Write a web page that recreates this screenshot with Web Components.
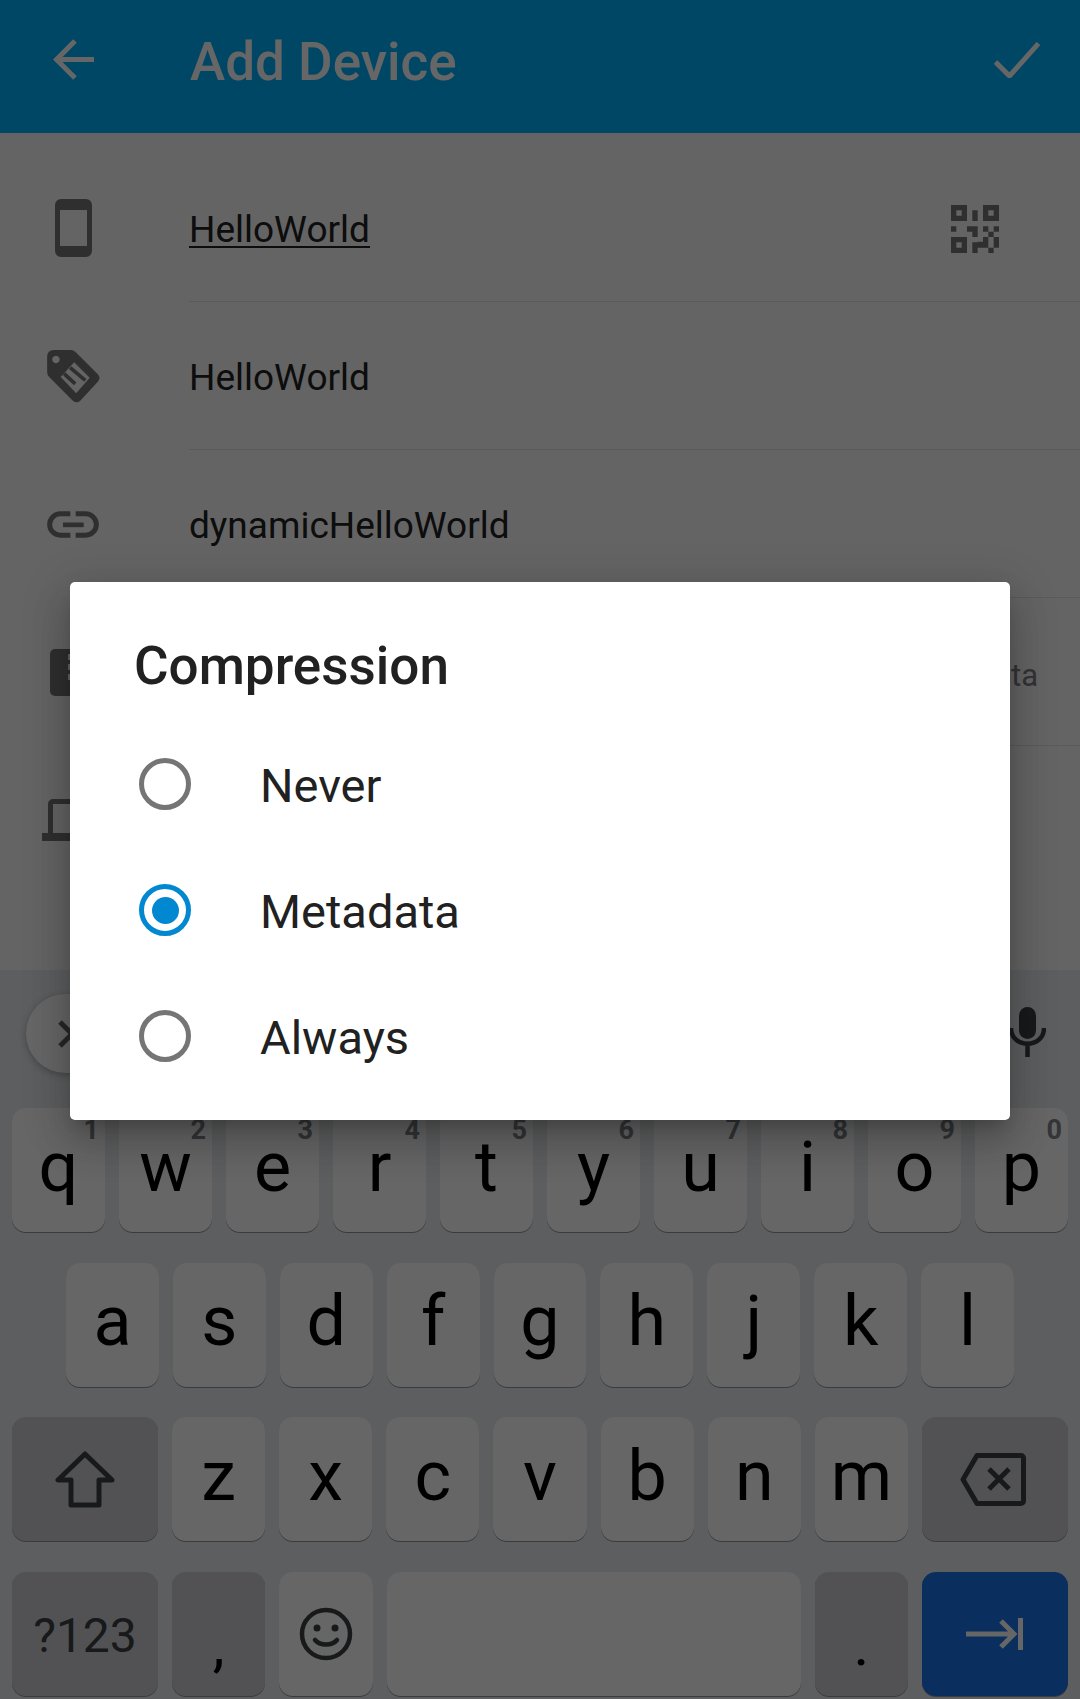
<!DOCTYPE html>
<html>
<head>
<meta charset="utf-8">
<style>
  html, body { margin: 0; padding: 0; }
  body { font-family: Roboto, "Liberation Sans", sans-serif; }
</style>
</head>
<body>
<add-device-screen>
  <app-bar title="Add Device"></app-bar>
  <form-row slot="rows" underline>
    <svg slot="icon" width="37" height="58" viewBox="0 0 37 58"><path fill-rule="evenodd" fill="#757575" d="M6 0h25a6 6 0 0 1 6 6v46a6 6 0 0 1-6 6H6a6 6 0 0 1-6-6V6a6 6 0 0 1 6-6zM5 11v36h27V11z"/></svg>
    HelloWorld
    <svg slot="end" style="margin-right:37px" width="48" height="48" viewBox="0 0 9 9" fill="#757575"><path fill-rule="evenodd" d="M0 0h3v3H0zM1 1v1h1V1zM6 0h3v3H6zM7 1v1h1V1zM0 6h3v3H0zM1 7v1h1V7z"/><path d="M4 1h1v2H4zM0 4h1v1H0zM3 4h2v1H3zM4 5h1v1H4zM6 4h1v1H6zM8 4h1v1H8zM7 5h1v1H7zM6 6h1v1H6zM8 6h1v2H8zM4 7h2v1H4zM5 6.9h2V8H5zM4 8h1v1H4zM7 8h1v1H7z"/></svg>
  </form-row>
  <form-row slot="rows">
    <svg slot="icon" width="53" height="53" viewBox="52 28 156 157"><path fill="#757575" fill-rule="evenodd" d="M72 28h50q8 0 14 6l66 66q10 11 0 22l-52 56q-10 10-22 0L58 108q-6-6-6-14V48q0-20 20-20zM78 45a11 11 0 1 0 .01 0zM132 64L92 108l46 48 40-46z"/><path stroke="#757575" stroke-width="11" d="M120 80l45 38M102 98l33 30"/></svg>
    HelloWorld
  </form-row>
  <form-row slot="rows">
    <svg slot="icon" width="52" height="27" viewBox="52 510 156 80"><path fill="none" stroke="#757575" stroke-width="15" d="M122 518H92a32 32 0 0 0 0 64h30M138 518h30a32 32 0 0 1 0 64h-30"/><path stroke="#757575" stroke-width="14" d="M100 551h62"/></svg>
    dynamicHelloWorld
  </form-row>
  <form-row slot="rows">
    <svg slot="icon" width="47" height="47" viewBox="0 0 47 47"><rect width="47" height="47" rx="5" fill="#757575"/><path fill="#fafafa" d="M18 5h5.500v6H18zM23.500 10H29v6h-5.500zM18 15h5.500v6H18zM23.500 20H29v6h-5.500zM18 25h5.500v6H18zM23.500 30H29v6h-5.500z"/></svg>
    <span slot="end" style="font-size:31px;color:#808080;display:block;padding-top:4px;margin-right:-2px">Metadata</span>
  </form-row>
  <form-row slot="rows" plain>
    <svg slot="icon" width="63" height="42" viewBox="0 0 63 42"><path fill="none" stroke="#757575" stroke-width="5" d="M8.500 36V5a2.500 2.500 0 0 1 2.500-2.500h41A2.500 2.500 0 0 1 54.500 5v31"/><path fill="#757575" d="M0 34h63v8H0z"/></svg>
  </form-row>

  <on-keyboard slot="keyboard"></on-keyboard>

  <choice-dialog slot="overlay" heading="Compression">
    <choice-radio>Never</choice-radio>
    <choice-radio checked>Metadata</choice-radio>
    <choice-radio>Always</choice-radio>
  </choice-dialog>
</add-device-screen>

<script>
class AddDeviceScreen extends HTMLElement {
  constructor() {
    super()
    this.attachShadow({ mode: 'open' }).innerHTML = `
      <style>
        :host { display: flex; flex-direction: column; width: 1080px; height: 1699px; position: relative; overflow: hidden; background: #fafafa; }
        #rows { display: flex; flex-direction: column; padding-top: 21px; flex: 1; min-height: 0; }
        #scrim { position: absolute; inset: 0; background: rgba(0, 0, 0, .6); }
      </style>
      <slot></slot>
      <div id="rows"><slot name="rows"></slot></div>
      <slot name="keyboard"></slot>
      <div id="scrim"></div>
      <slot name="overlay"></slot>`
  }
}

class AppBar extends HTMLElement {
  constructor() {
    super()
    this.attachShadow({ mode: 'open' }).innerHTML = `
      <style>
        :host { display: flex; align-items: center; height: 133px; flex: none; background: #00b2ff; color: #fff; padding-bottom: 10px; box-sizing: border-box; }
        #back { margin-left: 53px; margin-top: -4px; width: 41px; height: 41px; flex: none; }
        #title { margin-left: 96px; flex: 1; font-size: 53px; font-weight: 500; }
        #done { margin-right: 40px; margin-top: -4px; width: 46px; height: 36px; flex: none; }
      </style>
      <svg id="back" viewBox="0 0 41 41"><path fill="none" stroke="#fff" stroke-width="5" d="M41 20.500H4M22 2L3.500 20.500 22 39"/></svg>
      <div id="title"></div>
      <svg id="done" viewBox="0 0 46 36"><path fill="none" stroke="#fff" stroke-width="5" d="M1.500 20l14 14L44.500 1.500"/></svg>`
    this.shadowRoot.querySelector('#title').textContent = this.getAttribute('title')
  }
}

class FormRow extends HTMLElement {
  constructor() {
    super()
    this.attachShadow({ mode: 'open' }).innerHTML = `
      <style>
        :host { display: flex; height: 148px; flex: none; color: #212121; font-size: 37px; }
        #icon { width: 146px; display: flex; align-items: center; justify-content: center; flex: none; }
        #main { flex: 1; margin-left: 43px; padding-top: 3px; display: flex; align-items: center; box-sizing: border-box; border-bottom: 1.500px solid #e0e0e0; }
        #text { flex: 1; }
        :host([plain]) #main { border-bottom: 0; }
        :host([underline]) #text span { border-bottom: 2px solid #212121; display: inline-block; line-height: 32px; }
        #end { margin-right: 44px; display: flex; align-items: center; }
      </style>
      <div id="icon"><slot name="icon"></slot></div>
      <div id="main">
        <div id="text"><span><slot></slot></span></div>
        <div id="end"><slot name="end"></slot></div>
      </div>`
  }
}

class KeyCap extends HTMLElement {
  static get observedAttributes() {
    return ['hint']
  }

  constructor() {
    super()
    this.attachShadow({ mode: 'open' }).innerHTML = `
      <style>
        :host { display: flex; align-items: center; justify-content: center; flex: 1 1 0; position: relative; box-sizing: border-box; padding-bottom: 7px; height: 100%;
                background: #fff; border-radius: 14px; box-shadow: 0 1px 0 rgba(60, 64, 67, .5); color: #000; font-size: 70px; }
        :host([fn]) { background: #cdced2; }
        :host([wide]) { flex: none; width: 146px; }
        :host([grow]) { flex: none; width: 414px; }
        :host([flat]) { padding-bottom: 0; }
        :host([accent]) { background: #1a73e8; }
        :host([low]) { font-size: 60px; padding: 22px 0 0; }
        #hint { position: absolute; top: 6px; right: 6px; font-size: 27px; font-weight: 700; color: #80868b; }
      </style>
      <slot></slot><span id="hint"></span>`
  }

  attributeChangedCallback(name, oldValue, value) {
    this.shadowRoot.querySelector('#hint').textContent = value
  }
}

class OnKeyboard extends HTMLElement {
  constructor() {
    super()
    this.attachShadow({ mode: 'open' }).innerHTML = `
      <style>
        :host { display: block; height: 729px; flex: none; background: #e8eaed; box-sizing: border-box; }
        #strip { height: 138px; display: flex; align-items: flex-start; justify-content: space-between; padding: 24px 34px 0 26px; box-sizing: border-box; }
        #close { width: 92px; height: 79px; border-radius: 40px; background: #fff; box-shadow: 0 2px 6px rgba(60, 64, 67, .35); display: flex; align-items: center; justify-content: center; }
        #keys { display: flex; flex-direction: column; gap: 30.670px; padding: 0 12px; }
        .row { display: flex; gap: 14px; height: 124px; }
        .row.home { padding: 0 54px; }
        svg { display: block; }
      </style>
      <div id="strip">
        <div id="close"><svg width="30" height="30" viewBox="0 0 30 30"><path stroke="#5f6368" stroke-width="5" d="M3 3l24 24M27 3L3 27"/></svg></div>
        <svg width="37" height="50" viewBox="0 0 37 50" style="margin-top:13px"><rect x="10" width="17" height="32" rx="8.500" fill="#3c4043"/><path fill="none" stroke="#3c4043" stroke-width="4.500" d="M2 21c0 21 33 21 33 0M18.500 37v13"/></svg>
      </div>
      <div id="keys">
        <div class="row" id="r1"></div>
        <div class="row home" id="r2"></div>
        <div class="row" id="r3">
          <key-cap fn wide flat><svg width="60" height="57" viewBox="0 0 60 57"><path fill="none" stroke="#3c4043" stroke-width="5" stroke-linejoin="round" d="M30 3L3 29h13v25h28V29h13z"/></svg></key-cap>
          <key-cap>z</key-cap><key-cap>x</key-cap><key-cap>c</key-cap><key-cap>v</key-cap><key-cap>b</key-cap><key-cap>n</key-cap><key-cap>m</key-cap>
          <key-cap fn wide flat><svg style="margin-right:3px" width="66" height="53" viewBox="0 0 66 53"><path fill="none" stroke="#3c4043" stroke-width="5" stroke-linejoin="round" d="M17 2.500h44a2.500 2.500 0 0 1 2.500 2.500v43a2.500 2.500 0 0 1-2.500 2.500H17L3 26.500zM29 16l20 20M49 16L29 36"/></svg></key-cap>
        </div>
        <div class="row" id="r4">
          <key-cap fn wide flat style="font-size:48px;color:#3c4043;padding-top:4px">?123</key-cap>
          <key-cap fn low>,</key-cap>
          <key-cap flat><svg width="54" height="54" viewBox="0 0 54 54"><circle cx="27" cy="27" r="24" fill="none" stroke="#3c4043" stroke-width="4.500"/><circle cx="18" cy="21" r="3.500" fill="#3c4043"/><circle cx="36" cy="21" r="3.500" fill="#3c4043"/><path fill="none" stroke="#3c4043" stroke-width="4.500" stroke-linecap="round" d="M16 33c5 6 17 6 22 0"/></svg></key-cap>
          <key-cap grow></key-cap>
          <key-cap fn low>.</key-cap>
          <key-cap fn accent wide flat><svg width="57" height="32" viewBox="0 0 57 32"><path fill="none" stroke="#fff" stroke-width="5" d="M0 16h47M35 3l13 13-13 13M54.500 0v32"/></svg></key-cap>
        </div>
      </div>`
    const fill = (id, letters, hints) => {
      const row = this.shadowRoot.querySelector(id)
      ;[...letters].forEach((letter, i) => {
        const key = document.createElement('key-cap')
        key.textContent = letter
        if (hints) key.setAttribute('hint', hints[i])
        row.appendChild(key)
      })
    }
    fill('#r1', 'qwertyuiop', '1234567890')
    fill('#r2', 'asdfghjkl')
  }
}

class ChoiceRadio extends HTMLElement {
  constructor() {
    super()
    this.attachShadow({ mode: 'open' }).innerHTML = `
      <style>
        :host { display: flex; align-items: center; height: 126px; font-size: 47px; color: #212121; }
        #ring { width: 52px; height: 52px; margin-left: 69px; margin-right: 69px; border-radius: 50%; border: 5.500px solid #757575; box-sizing: border-box; display: flex; align-items: center; justify-content: center; flex: none; }
        #label { padding-top: 3px; }
        :host([checked]) #ring { border-color: #0288d1; }
        :host([checked]) #ring::after { content: ''; width: 27px; height: 27px; border-radius: 50%; background: #0288d1; }
      </style>
      <div id="ring"></div><div id="label"><slot></slot></div>`
  }
}

class ChoiceDialog extends HTMLElement {
  constructor() {
    super()
    this.attachShadow({ mode: 'open' }).innerHTML = `
      <style>
        :host { position: absolute; left: 70px; top: 582px; width: 940px; height: 538px; background: #fff; border-radius: 5px; display: flex; flex-direction: column;
                box-shadow: 0 11px 15px -7px rgba(0, 0, 0, .2), 0 24px 38px 3px rgba(0, 0, 0, .14), 0 9px 46px 8px rgba(0, 0, 0, .12); }
        #heading { font-size: 53px; font-weight: 500; color: #212121; padding: 54px 0 0 64px; height: 85px; line-height: 60px; }
        #items { display: flex; flex-direction: column; }
      </style>
      <div id="heading"></div>
      <div id="items"><slot></slot></div>`
    this.shadowRoot.querySelector('#heading').textContent = this.getAttribute('heading')
  }
}

customElements.define('add-device-screen', AddDeviceScreen)
customElements.define('app-bar', AppBar)
customElements.define('form-row', FormRow)
customElements.define('key-cap', KeyCap)
customElements.define('on-keyboard', OnKeyboard)
customElements.define('choice-radio', ChoiceRadio)
customElements.define('choice-dialog', ChoiceDialog)
</script>
</body>
</html>
